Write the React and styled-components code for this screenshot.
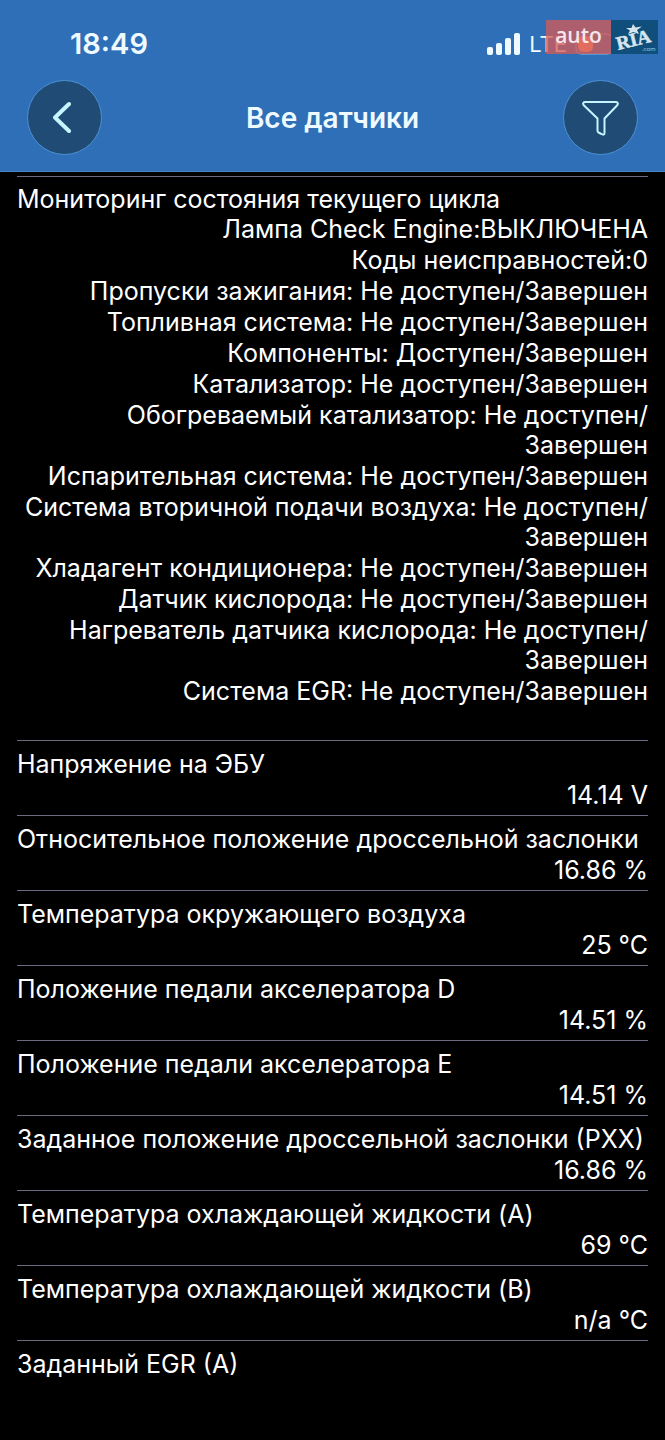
import React from 'react';
import styled, { createGlobalStyle } from 'styled-components';

const blue = '#2f6fb8';
const navy = '#1f4b75';
const lineColor = '#6a6a80';
const systemFont = 'Inter, "Liberation Sans", sans-serif';

const GlobalStyle = createGlobalStyle`
  * {
    box-sizing: border-box;
  }

  body {
    margin: 0;
    background: #000;
    color: #fff;
    font-family: ${systemFont};
  }
`;

const Page = styled.div`
  min-height: 100vh;
`;

const Header = styled.header`
  position: relative;
  background: ${blue};
  border-bottom: 1px solid #4a86c4;
`;

const StatusBar = styled.div`
  height: 80px;
  padding: 8px 48px 0 70px;
  display: flex;
  align-items: center;
  justify-content: space-between;
`;

const Time = styled.time`
  font-size: 29px;
  line-height: 32px;
  font-weight: 600;
  color: #eefaff;
`;

const Network = styled.div`
  display: flex;
  align-items: center;
  gap: 8px;
  font-size: 22px;
  line-height: 32px;
  color: #eefaff;
`;

const Watermark = styled.div`
  position: absolute;
  top: 20px;
  right: 7px;
  display: flex;
  height: 34px;
`;

const Auto = styled.span`
  width: 65px;
  background: rgba(214, 91, 86, 0.76);
  color: #f4e6ea;
  font: 600 21px/30px "Open Sans", sans-serif;
  text-align: center;
`;

const NavBar = styled.nav`
  height: 91px;
  padding: 0 27px 16px;
  display: flex;
  align-items: center;
  justify-content: space-between;
`;

const RoundButton = styled.button`
  width: 75px;
  height: 75px;
  padding: 0;
  display: flex;
  align-items: center;
  justify-content: center;
  border: 1px solid #4c92d4;
  border-radius: 50%;
  background: ${navy};
  color: #c4f6ff;
`;

const Title = styled.h1`
  margin: 0;
  font-size: 28px;
  line-height: 32px;
  font-weight: 600;
  color: #eefaff;
`;

const Sensors = styled.dl`
  margin: 0;
  padding: 4px 17px 0;
`;

const Sensor = styled.div`
  padding: ${props => (props.$long ? '7px 0 34px' : '8px 0 4px')};
  border-top: 1px solid ${lineColor};
  font-size: 25px;
  line-height: ${props => (props.$long ? '30px' : '31px')};
`;

const Name = styled.dt`
  white-space: nowrap;
`;

const Value = styled.dd`
  min-height: 31px;
  margin: 0;
  text-align: right;
`;

const Monitors = styled.ul`
  margin: 0;
  padding: 0;
  display: grid;
  gap: 1px;
  list-style: none;
`;

const monitors = [
  'Лампа Check Engine:ВЫКЛЮЧЕНА',
  'Коды неисправностей:0',
  'Пропуски зажигания: Не доступен/Завершен',
  'Топливная система: Не доступен/Завершен',
  'Компоненты: Доступен/Завершен',
  'Катализатор: Не доступен/Завершен',
  'Обогреваемый катализатор: Не доступен/Завершен',
  'Испарительная система: Не доступен/Завершен',
  'Система вторичной подачи воздуха: Не доступен/Завершен',
  'Хладагент кондиционера: Не доступен/Завершен',
  'Датчик кислорода: Не доступен/Завершен',
  'Нагреватель датчика кислорода: Не доступен/Завершен',
  'Система EGR: Не доступен/Завершен',
];

const sensors = [
  { name: 'Напряжение на ЭБУ', value: '14.14 V' },
  { name: 'Относительное положение дроссельной заслонки', value: '16.86 %' },
  { name: 'Температура окружающего воздуха', value: '25 °C' },
  { name: 'Положение педали акселератора D', value: '14.51 %' },
  { name: 'Положение педали акселератора E', value: '14.51 %' },
  { name: 'Заданное положение дроссельной заслонки (РХХ)', value: '16.86 %' },
  { name: 'Температура охлаждающей жидкости (A)', value: '69 °C' },
  { name: 'Температура охлаждающей жидкости (B)', value: 'n/a °C' },
  { name: 'Заданный EGR (A)', value: '' },
];

// Allow a line break after the slash
const breakable = text => {
  const [before, after] = text.split('/');
  return after ? <>{before}/<wbr />{after}</> : before;
};

const SignalIcon = () => (
  <svg width="34" height="22" viewBox="0 0 34 22" fill="#eefaff" aria-hidden="true">
    <rect x="0" y="14" width="6" height="8" rx="2" />
    <rect x="9" y="10" width="6" height="12" rx="2" />
    <rect x="18" y="5" width="6" height="17" rx="2" />
    <rect x="27" y="0" width="6" height="22" rx="2" />
  </svg>
);

const BatteryIcon = () => (
  <svg width="42" height="22" viewBox="0 0 42 22" aria-hidden="true">
    <rect x="1" y="1" width="37" height="20" rx="6" fill="none" stroke="#6fa0d4" strokeWidth="1.500" />
    <rect x="3" y="3" width="15" height="16" rx="5" fill="#ffa878" />
  </svg>
);

const RiaLogo = () => (
  <svg width="47" height="34" viewBox="0 0 47 34" role="img" aria-label="RIA.com">
    <rect width="47" height="34" fill="#104f7c" />
    <path d="M22 4L24.500 7.500L31 6.500L26 10L28 14L22.500 12L17 14L19 10.500L15 8L20.500 8Z" fill="#d7e6ee" />
    <text x="7" y="30" transform="rotate(-14 7 30)" fill="#d7e6ee" stroke="#d7e6ee" strokeWidth=".5" fontFamily="Liberation Serif, serif" fontWeight="700" fontSize="19">RIA</text>
    <text x="31" y="31" fill="#b9d0df" fontFamily="Open Sans, sans-serif" fontSize="6">.com</text>
  </svg>
);

const BackIcon = () => (
  <svg width="24" height="34" viewBox="0 0 24 34" fill="none" stroke="currentColor" strokeWidth="4" strokeLinecap="round" strokeLinejoin="round" aria-hidden="true">
    <path d="M16 3L2 16.500L16 30" />
  </svg>
);

const FilterIcon = () => (
  <svg width="38" height="36" viewBox="0 0 38 36" fill="none" stroke="currentColor" strokeWidth="2" strokeLinejoin="round" aria-hidden="true">
    <path d="M3 2H34C36 2 36.500 4 35 5.500L22.500 18.500V33C22.500 35 21 35 19.500 34L16.500 32.500C15.500 32 15.500 31.500 15.500 30.500V18.500L2 5.500C.5 4 1 2 3 2Z" />
  </svg>
);

const App = () => (
  <Page>
    <GlobalStyle />
    <Header>
      <StatusBar>
        <Time>18:49</Time>
        <Network>
          <SignalIcon />
          <span>LTE</span>
          <BatteryIcon />
        </Network>
      </StatusBar>
      <NavBar>
        <RoundButton type="button" aria-label="Назад">
          <BackIcon />
        </RoundButton>
        <Title>Все датчики</Title>
        <RoundButton type="button" aria-label="Фильтр">
          <FilterIcon />
        </RoundButton>
      </NavBar>
      <Watermark>
        <Auto>auto</Auto>
        <RiaLogo />
      </Watermark>
    </Header>
    <Sensors>
      <Sensor $long>
        <Name>Мониторинг состояния текущего цикла</Name>
        <Value>
          <Monitors>
            {monitors.map(text => <li key={text}>{breakable(text)}</li>)}
          </Monitors>
        </Value>
      </Sensor>
      {sensors.map(({ name, value }) => (
        <Sensor key={name}>
          <Name>{name}</Name>
          <Value>{value}</Value>
        </Sensor>
      ))}
    </Sensors>
  </Page>
);

export default App;
